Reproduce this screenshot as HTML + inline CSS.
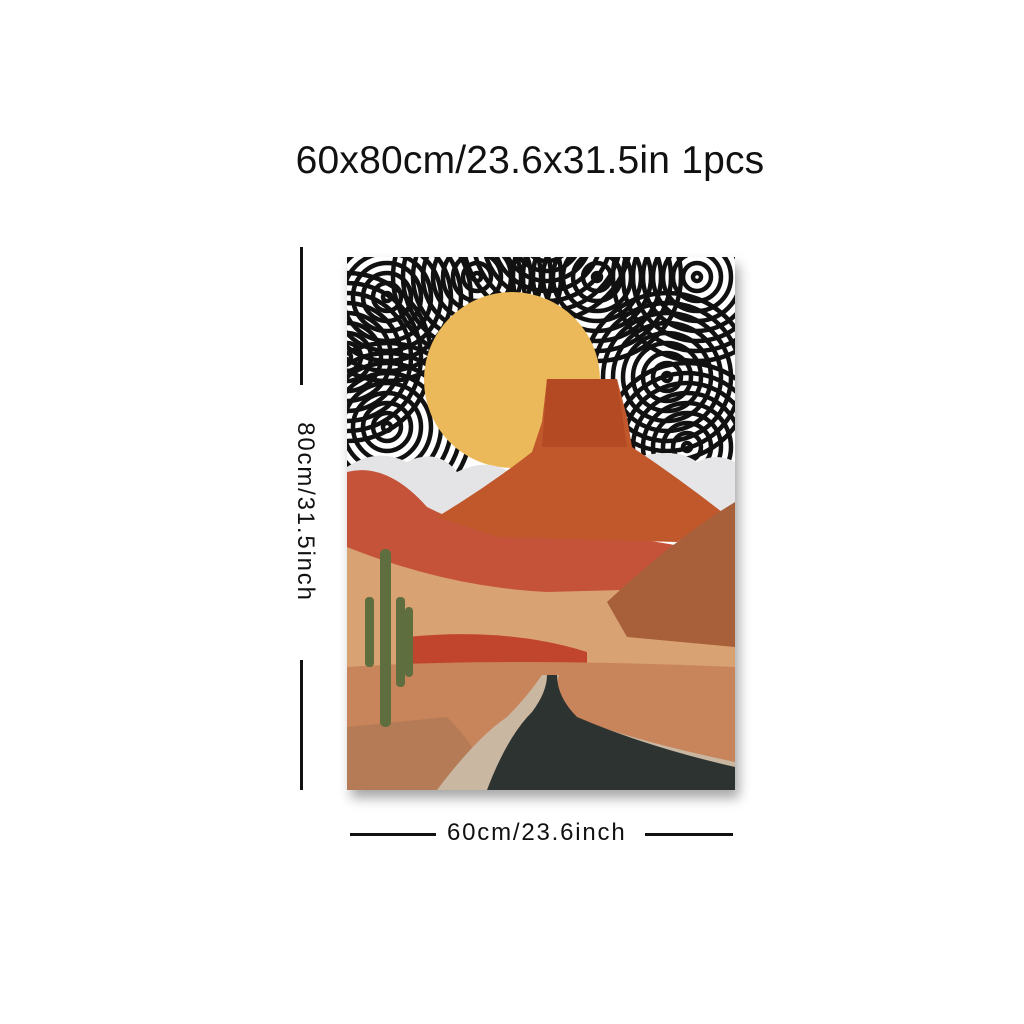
<!DOCTYPE html>
<html><head><style>
body{margin:0;width:1024px;height:1024px;background:#fff;position:relative;overflow:hidden;font-family:"Liberation Sans",sans-serif;}
.t{position:absolute;left:0;width:1060px;top:139px;text-align:center;font-size:39px;color:#111;letter-spacing:0.2px}
.ln{position:absolute;background:#111}
.v{position:absolute;left:305px;top:512px;transform:translate(-50%,-50%) rotate(90deg);font-size:24px;letter-spacing:1.8px;white-space:nowrap;color:#111}
.h{position:absolute;left:447px;top:819px;font-size:24px;letter-spacing:1.8px;color:#111}
</style></head><body>
<div class="t">60x80cm/23.6x31.5in 1pcs</div>
<div class="ln" style="left:300px;top:247px;width:3px;height:138px"></div>
<div class="ln" style="left:300px;top:660px;width:3px;height:130px"></div>
<div class="v">80cm/31.5inch</div>
<div class="ln" style="left:350px;top:833px;width:86px;height:3px"></div>
<div class="ln" style="left:645px;top:833px;width:88px;height:3px"></div>
<div class="h">60cm/23.6inch</div>
<svg style="position:absolute;left:347px;top:257px;filter:drop-shadow(4px 8px 6px rgba(0,0,0,.35))" width="388" height="533" viewBox="0 0 388 533">
<defs><clipPath id="c"><rect width="388" height="533"/></clipPath>
<g id="sw" fill="none" stroke="#111" stroke-width="4.5"><circle r="4"/><circle r="14"/><circle r="24"/><circle r="34"/><circle r="44"/><circle r="54"/><circle r="64"/><circle r="74"/><circle r="84"/></g></defs>
<g clip-path="url(#c)">
<rect width="388" height="533" fill="#fff"/>
<use href="#sw" x="0" y="100"/>
<use href="#sw" x="200" y="-20"/>
<use href="#sw" x="40" y="170"/>
<use href="#sw" x="40" y="40"/>
<use href="#sw" x="130" y="20"/>
<use href="#sw" x="250" y="20"/>
<use href="#sw" x="350" y="20"/>
<use href="#sw" x="320" y="120"/>
<use href="#sw" x="340" y="190"/>
<circle cx="165" cy="123" r="88" fill="#ecb95a"/>
<path d="M0 210 Q30 190 60 205 Q90 190 110 215 Q150 195 180 230 L180 260 L0 260Z" fill="#e4e4e6"/>
<path d="M290 200 Q330 190 350 205 Q370 195 388 205 L388 260 L300 260Z" fill="#e6e6e8"/>
<path d="M0 215 Q40 205 80 250 Q120 270 160 280 L280 280 L340 290 L388 250 L388 400 L0 400Z" fill="#c5533a"/>
<path d="M90 260 Q140 230 185 195 L195 165 L200 122 L270 122 L280 160 L285 190 Q330 220 375 255 L330 285 L150 280Z" fill="#c0582c"/>
<path d="M200 122 L270 122 L280 190 L195 190Z" fill="#b44a24"/>
<path d="M0 290 Q100 330 200 335 L388 330 L388 420 L0 420Z" fill="#d9a273"/>
<path d="M260 345 Q330 280 388 245 L388 390 L280 380Z" fill="#a8603a"/>
<path d="M60 380 Q160 370 240 395 L240 415 L60 420Z" fill="#c0452c"/>
<path d="M0 410 Q150 400 388 410 L388 533 L0 533Z" fill="#c8845a"/>
<path d="M0 470 L100 460 Q140 500 140 533 L0 533Z" fill="#b57a56"/>
<path d="M90 533 Q130 480 160 460 Q180 440 195 418 L212 418 Q205 440 215 455 Q270 480 388 505 L388 533Z" fill="#c9b7a2"/>
<path d="M140 533 Q160 480 185 455 Q200 435 200 418 L210 418 Q210 440 230 460 Q300 490 388 510 L388 533Z" fill="#2d3330"/>
<rect x="33" y="292" width="11" height="178" rx="5" fill="#5e6e3e"/>
<rect x="18" y="340" width="9" height="70" rx="4" fill="#5e6e3e"/>
<rect x="49" y="340" width="9" height="90" rx="4" fill="#5e6e3e"/>
<rect x="58" y="350" width="8" height="70" rx="4" fill="#5e6e3e"/>
</g></svg>
</body></html>
